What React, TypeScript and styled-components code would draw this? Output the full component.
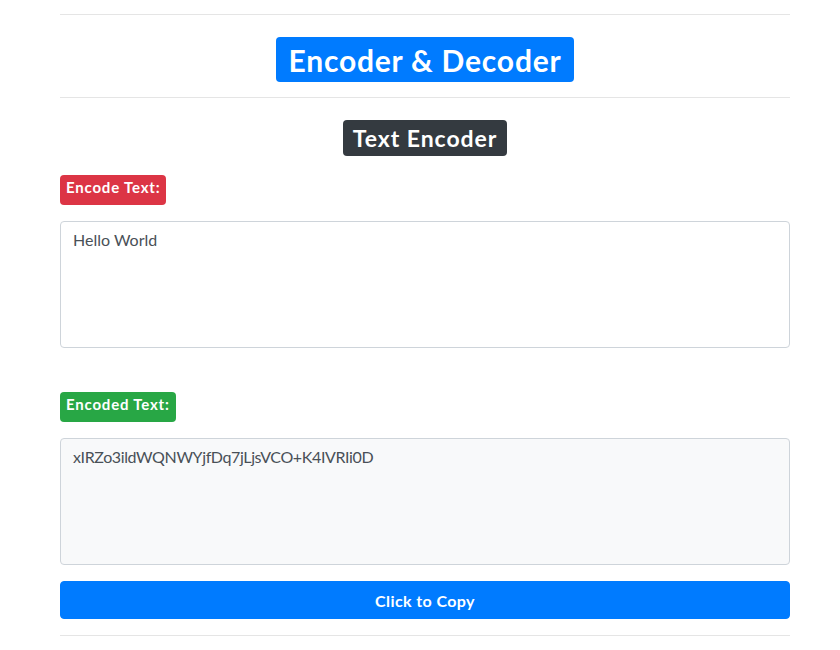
import React, { useState } from 'react';
import styled, { createGlobalStyle } from 'styled-components';

const GlobalStyle = createGlobalStyle`
  * {
    box-sizing: border-box;
  }
  body {
    margin: 0;
    background: #fff;
    font-family: Lato, "Noto Sans", sans-serif;
    color: #212529;
  }
`;

const Page = styled.div`
  width: 730px;
  margin-left: 60px;
  padding-top: 14px;
  display: flex;
  flex-direction: column;
`;

const Rule = styled.hr`
  margin: 0;
  border: 0;
  border-top: 1px solid rgba(0, 0, 0, 0.1);
`;

const Header = styled.div`
  display: flex;
  justify-content: center;
  padding: 22px 0 15px;
`;

const Badge = styled.span<{ $bg: string }>`
  display: inline-block;
  background: ${(p) => p.$bg};
  color: #fff;
  font-weight: 700;
  border-radius: 4px;
  white-space: nowrap;
`;

const TitleBadge = styled(Badge)`
  font-size: 30px;
  line-height: 45px;
  letter-spacing: 0.8px;
  padding: 1px 12px 0 12px;
  height: 45px;
`;

const SubBadge = styled(Badge)`
  font-size: 23px;
  line-height: 36px;
  letter-spacing: 0.95px;
  padding: 0 10px;
`;

const LabelBadge = styled(Badge)`
  font-size: 15px;
  line-height: 18px;
  letter-spacing: 0.8px;
  padding: 3px 6px 9px;
`;

const Section = styled.div`
  display: flex;
  justify-content: center;
  margin-top: 22px;
`;

const Label = styled.div<{ $top: number }>`
  margin-top: ${(p) => p.$top}px;
  display: flex;
`;

const TextBox = styled.textarea<{ $readOnly?: boolean }>`
  display: block;
  width: 100%;
  height: 127px;
  margin-top: 16px;
  padding: 6px 12px;
  font-family: inherit;
  font-size: 16px;
  line-height: 24px;
  letter-spacing: ${(p) => (p.$readOnly ? '-0.38px' : '0')};
  color: #495057;
  background: ${(p) => (p.$readOnly ? '#f8f9fa' : '#fff')};
  border: 1px solid #ced4da;
  border-radius: 4px;
  resize: none;
  outline: none;
`;

const CopyButton = styled.button`
  display: block;
  width: 100%;
  height: 38px;
  margin-top: 16px;
  border: 1px solid #007bff;
  border-radius: 4px;
  background: #007bff;
  color: #fff;
  font-family: inherit;
  font-size: 16px;
  font-weight: 700;
  letter-spacing: 0.4px;
  cursor: pointer;
`;

const BottomRule = styled(Rule)`
  margin-top: 16px;
`;

const App: React.FC = () => {
  const [text, setText] = useState('Hello World');
  const encoded = 'xIRZo3ildWQNWYjfDq7jLjsVCO+K4IVRIi0D';

  return (
    <>
      <GlobalStyle />
      <Page>
        <Rule />
        <Header>
          <TitleBadge $bg="#007bff">Encoder &amp; Decoder</TitleBadge>
        </Header>
        <Rule />
        <Section>
          <SubBadge $bg="#343a40">Text Encoder</SubBadge>
        </Section>
        <Label $top={19}>
          <LabelBadge $bg="#dc3545">Encode Text:</LabelBadge>
        </Label>
        <TextBox value={text} onChange={(e) => setText(e.target.value)} />
        <Label $top={44}>
          <LabelBadge $bg="#28a745">Encoded Text:</LabelBadge>
        </Label>
        <TextBox $readOnly readOnly value={encoded} />
        <CopyButton onClick={() => navigator.clipboard?.writeText(encoded)}>
          Click to Copy
        </CopyButton>
        <BottomRule />
      </Page>
    </>
  );
};

export default App;
